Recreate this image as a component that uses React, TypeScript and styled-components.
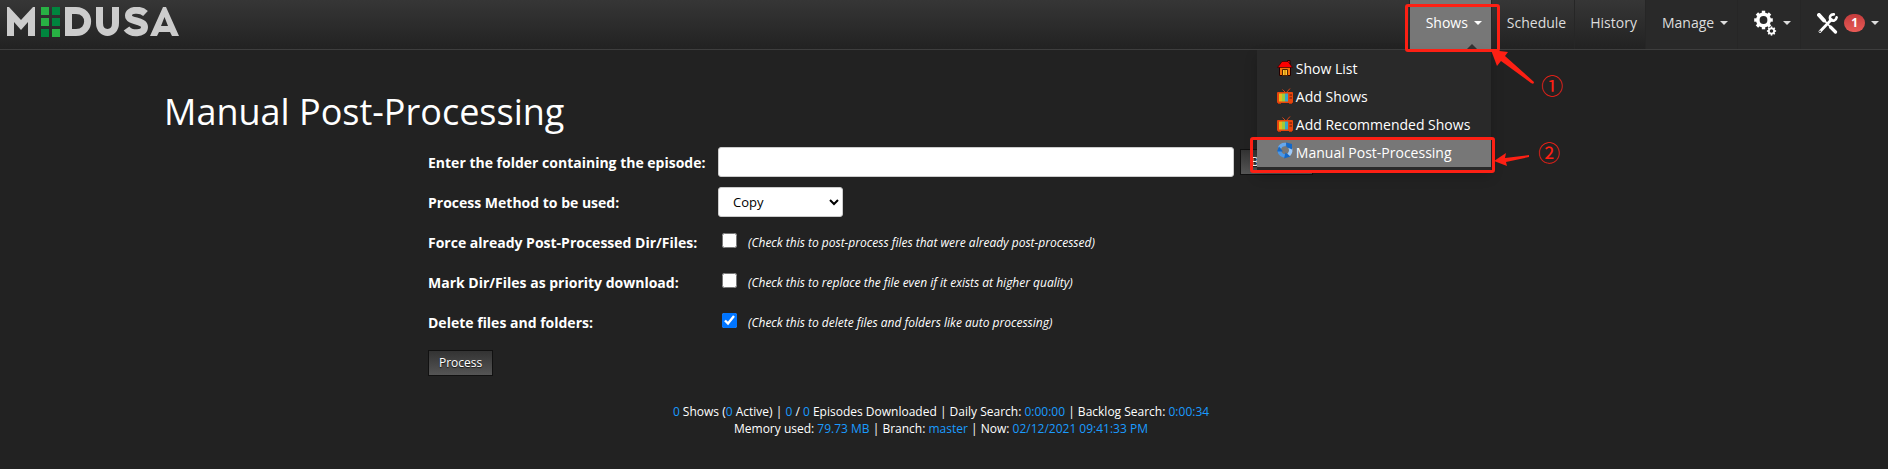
import React from "react";
import styled, { createGlobalStyle, css } from "styled-components";

const GlobalStyle = createGlobalStyle`
  *, *::before, *::after { box-sizing: border-box; }
  body {
    margin: 0;
    background: #222;
    color: #fff;
    font-family: "Open Sans", "Noto Sans CJK SC", sans-serif;
    font-size: 14px;
    line-height: 20px;
  }
`;

const Navbar = styled.header`
  display: flex;
  justify-content: space-between;
  height: 50px;
  background: linear-gradient(#363636, #222);
  border-bottom: 1px solid #3e3e3e;
`;

const Brand = styled.a`
  display: block;
  padding: 7px 0 0 6px;
`;

const NavList = styled.ul`
  display: flex;
  margin: 0;
  padding: 0;
  list-style: none;
`;

const NavItem = styled.li`
  position: relative;
`;

const NavLink = styled.a<{ $tone?: "active" | "dark" }>`
  display: flex;
  align-items: center;
  gap: 6px;
  height: 49px;
  padding: 0 8px 3px 15px;
  border-left: 1px solid #262626;
  color: #ddd;
  text-decoration: none;
  ${(p) => p.$tone === "dark" && css`background: #292929; padding: 0 9px 3px 16px;`}
  ${(p) => p.$tone === "active" && css`background: #777; color: #fff; padding: 0 9px 3px 16px;`}
`;

const Caret = styled.span`
  border: 4px solid transparent;
  border-top-color: currentColor;
  border-bottom: 0;
`;

const Badge = styled.span`
  padding: 0 7px;
  border-radius: 9px;
  background: linear-gradient(#c43c3c, #e85a56);
  color: #fff;
  font-size: 12px;
  font-weight: 700;
  line-height: 18px;
`;

const MenuPointer = styled.span`
  position: absolute;
  right: 14px;
  bottom: 0;
  border: 5px solid transparent;
  border-bottom-color: #333;
  border-top: 0;
`;

const Menu = styled.ul`
  position: absolute;
  z-index: 2;
  top: 50px;
  right: 0;
  width: 234px;
  margin: 0;
  padding: 5px 0 3px;
  background: #292929;
  box-shadow: 0 6px 12px rgba(0, 0, 0, 0.2);
  list-style: none;
`;

const MenuLink = styled.a<{ $active?: boolean }>`
  display: flex;
  align-items: center;
  gap: 3px;
  height: 28px;
  padding-left: 20px;
  background: ${(p) => (p.$active ? "#777" : "transparent")};
  color: #fff;
  text-decoration: none;
  white-space: nowrap;
`;

const Highlight = styled.span<{ $target: "tab" | "entry" }>`
  position: absolute;
  z-index: 3;
  border: 3px solid #fd2014;
  border-radius: 3px;
  pointer-events: none;
  ${(p) => p.$target === "tab"
    ? css`inset: 4px -9px -3px -4px;`
    : css`inset: 87px -4px -3px -7px;`}
`;

const Notes = styled.svg`
  position: absolute;
  z-index: 4;
  top: 40px;
  left: 80px;
  pointer-events: none;
`;

const Main = styled.main`
  padding: 40px 0 0 164px;
`;

const Title = styled.h1`
  margin: 0;
  font-size: 36px;
  font-weight: 400;
  line-height: 44px;
`;

const Form = styled.form`
  margin: 13px 0 0 264px;
`;

const Rows = styled.div`
  display: grid;
  gap: 10px;
  margin-bottom: 13px;
`;

const Row = styled.div`
  display: grid;
  grid-template-columns: 290px auto;
  align-items: center;
  min-height: 30px;
`;

const Label = styled.label`
  padding-top: 2px;
  font-weight: 700;
`;

const Field = styled.div`
  display: flex;
  align-items: center;
  gap: 6px;
`;

const TextInput = styled.input`
  width: 516px;
  height: 30px;
  padding: 4px 12px;
  border: 1px solid #ccc;
  border-radius: 3px;
  background: #fff;
  font: inherit;
`;

const Select = styled.select`
  width: 125px;
  height: 30px;
  padding: 0 0 0 10px;
  border: 1px solid #ccc;
  border-radius: 3px;
  background: #fff;
  color: #000;
  font: inherit;
  font-size: 13px;
`;

const Tick = styled.input`
  width: 15px;
  height: 15px;
  margin: 0 5px 3px 4px;
  accent-color: #0075ff;
`;

const Hint = styled.span`
  padding-top: 2px;
  font-size: 12px;
  font-style: italic;
`;

const Button = styled.button`
  display: block;
  height: 26px;
  padding: 0 10px;
  border: 1px solid #111;
  background: linear-gradient(#333, #555);
  color: #fff;
  font: inherit;
  font-size: 12px;
  text-shadow: 0 1px 1px rgba(0, 0, 0, 0.75);
`;

const Footer = styled.footer`
  padding: 27px 6px 20px 0;
  font-size: 12px;
  line-height: 17px;
  text-align: center;
`;

const Value = styled.span`
  color: #1a9cff;
`;

const Logo = () => (
  <svg width="175" height="31" viewBox="0 0 175 31" role="img" aria-label="Medusa">
    <g fill="none" stroke="#ccc" strokeWidth="7">
      <path d="M62.500 3.500H70C85.500 3.500 85.500 25.500 70 25.500H62.500Z" />
      <path d="M93.500 0V16C93.500 28.500 109.500 28.500 109.500 16V0" />
      <path d="M139.500 6.500C134 1.500 122.500 2.500 122.500 8.500C122.500 15.500 138.500 12.500 138.500 20C138.500 27.500 125 27.500 120.500 21.500" />
    </g>
    <path d="M1 29V0H3L15 13 27 0H29V29H22V15L15 23 8 15V29Z" fill="#ccc" />
    <path
      d="M144 29L157 0H160L173 29H166L164 25H153L151 29ZM158.500 10L155 19H162Z"
      fill="#ccc"
      fillRule="evenodd"
    />
    {[0, 11, 22].map((y, i) => (
      <g key={y}>
        <rect x="35" y={y} width="8" height="8" fill={i === 2 ? "#00853e" : "#28b144"} />
        <rect x="46" y={y} width="8" height="8" fill={i === 2 ? "#28b144" : "#00853e"} />
      </g>
    ))}
  </svg>
);

const teeth = [0, 45, 90, 135, 180, 225, 270, 315];

const Cogs = () => (
  <svg width="23" height="26" viewBox="0 0 23 26" aria-hidden="true">
    <g fill="none" stroke="#fff">
      <circle cx="9.500" cy="10" r="5.700" strokeWidth="3.600" />
      {teeth.map((a) => (
        <path key={a} d="M9.500 3.500V.7" strokeWidth="3.400" transform={`rotate(${a} 9.500 10)`} />
      ))}
      <circle cx="17.500" cy="21" r="2.700" strokeWidth="1.800" />
      {teeth.map((a) => (
        <path key={a} d="M17.500 18V16.400" strokeWidth="1.600" transform={`rotate(${a} 17.500 21)`} />
      ))}
    </g>
  </svg>
);

const Tools = () => (
  <svg width="21" height="21" viewBox="0 0 21 21" aria-hidden="true">
    <g fill="none" stroke="#fff" strokeLinecap="round">
      <path d="M2 2L7 7.500" strokeWidth="4" />
      <path d="M7 7L13 13.500" strokeWidth="1.800" />
      <path d="M13.500 14L18.500 19" strokeWidth="3.200" />
      <path d="M3 18.500L14.500 6.500" strokeWidth="2.800" />
      <path d="M16.800 1.400C13.500 1.200 12.200 4 13.400 6.600C16 8.600 19 7.600 19.600 4.400" strokeWidth="2.600" />
    </g>
    <circle cx="3" cy="18.400" r=".8" fill="#292929" />
  </svg>
);

const House = () => (
  <svg width="16" height="18" viewBox="0 0 16 18" aria-hidden="true">
    <path d="M10.500 .5H13V6H10.500Z" fill="#e11" stroke="#200" />
    <path d="M2.500 6.500H13.500V15.500H2.500Z" fill="#f4730c" stroke="#200" />
    <path d="M5 1.500H11L15.500 7.500H.5Z" fill="#f00" stroke="#300" strokeWidth=".7" />
    <path d="M5.500 9.500H10.500V15.500H5.500Z" fill="#fc3" stroke="#520" />
    <path d="M8 10V15" stroke="#b60" />
  </svg>
);

const Television = () => (
  <svg width="16" height="18" viewBox="0 0 16 18" aria-hidden="true">
    <path d="M5.500 1.500L9 5 13 .5" fill="none" stroke="#d84315" />
    <rect y="4" width="16" height="11" rx="1" fill="#e8450c" />
    <path d="M1 15H4V16H1ZM12 15H15V16H12Z" fill="#b8340b" />
    <path d="M2 5.500H5V13.500H2Z" fill="#e7b91d" />
    <path d="M5 5.500H8V13.500H5Z" fill="#9acb3e" />
    <path d="M8 5.500H11V13.500H8Z" fill="#38a4c7" />
    <path d="M12.500 7H15M12.500 10H15" stroke="#601b09" />
  </svg>
);

const Recycle = () => (
  <svg width="16" height="22" viewBox="0 0 16 22" aria-hidden="true">
    <g fill="none" strokeWidth="3.600">
      <path d="M2.500 6A6 6 0 0 1 9 2.600" stroke="#64a7ee" />
      <path d="M13 5.500A6 6 0 0 1 11.500 13" stroke="#9dc9f8" />
      <path d="M9 14A6 6 0 0 1 2.300 8.500" stroke="#4b97e6" />
    </g>
    <path d="M9 .5L15 2V7.500L9.500 5ZM13.500 14.500L7 16.500 8.500 10.500ZM0 9.500L2 4.500 6 9.500Z" fill="#1268ca" />
  </svg>
);

const Annotations = () => (
  <Notes width="90" height="130" viewBox="0 0 90 130" aria-hidden="true">
    <g fill="#fd2014">
      <path d="M2 10L19 12 16 16 45 42Q45 45 42 43L12 21 8 26Z" />
      <path d="M5 121L17 113 16 118 40 115V117L17 122 18 126Z" />
    </g>
    <g fill="#fd2014" fontSize="22" textAnchor="middle">
      <text x="63" y="54">①</text>
      <text x="60" y="121">②</text>
    </g>
  </Notes>
);

const menu = [
  { label: "Show List", icon: <House /> },
  { label: "Add Shows", icon: <Television /> },
  { label: "Add Recommended Shows", icon: <Television /> },
  { label: "Manual Post-Processing", icon: <Recycle />, active: true },
];

const options = [
  { id: "force", label: "Force already Post-Processed Dir/Files:", hint: "(Check this to post-process files that were already post-processed)" },
  { id: "priority", label: "Mark Dir/Files as priority download:", hint: "(Check this to replace the file even if it exists at higher quality)" },
  { id: "delete", label: "Delete files and folders:", hint: "(Check this to delete files and folders like auto processing)", checked: true },
];

export default function App() {
  return (
    <>
      <GlobalStyle />
      <Navbar>
        <Brand href="#"><Logo /></Brand>
        <nav>
          <NavList>
            <NavItem>
              <NavLink href="#" $tone="active">Shows <Caret /></NavLink>
              <MenuPointer />
              <Menu>
                {menu.map((m) => (
                  <li key={m.label}>
                    <MenuLink href="#" $active={m.active}>{m.icon}{m.label}</MenuLink>
                  </li>
                ))}
                <Highlight as="li" $target="entry" aria-hidden="true" />
              </Menu>
              <Highlight $target="tab" />
              <Annotations />
            </NavItem>
            <NavItem><NavLink href="#">Schedule</NavLink></NavItem>
            <NavItem><NavLink href="#">History</NavLink></NavItem>
            <NavItem><NavLink href="#" $tone="dark">Manage <Caret /></NavLink></NavItem>
            <NavItem><NavLink href="#" $tone="dark" aria-label="Settings"><Cogs /><Caret /></NavLink></NavItem>
            <NavItem><NavLink href="#" $tone="dark" aria-label="Tools"><Tools /><Badge>1</Badge><Caret /></NavLink></NavItem>
          </NavList>
        </nav>
      </Navbar>
      <Main>
        <Title>Manual Post-Processing</Title>
        <Form>
          <Rows>
            <Row>
              <Label htmlFor="folder">Enter the folder containing the episode:</Label>
              <Field>
                <TextInput id="folder" type="text" />
                <Button type="button">Browse...</Button>
              </Field>
            </Row>
            <Row>
              <Label htmlFor="method">Process Method to be used:</Label>
              <Field>
                <Select id="method" defaultValue="copy"><option value="copy">Copy</option></Select>
              </Field>
            </Row>
            {options.map((o) => (
              <Row key={o.id}>
                <Label htmlFor={o.id}>{o.label}</Label>
                <Field>
                  <Tick id={o.id} type="checkbox" defaultChecked={o.checked} />
                  <Hint>{o.hint}</Hint>
                </Field>
              </Row>
            ))}
          </Rows>
          <Button type="button">Process</Button>
        </Form>
      </Main>
      <Footer>
        <div>
          <Value>0</Value> Shows (<Value>0</Value> Active) | <Value>0</Value> / <Value>0</Value> Episodes Downloaded | Daily Search: <Value>0:00:00</Value> | Backlog Search: <Value>0:00:34</Value>
        </div>
        <div>
          Memory used: <Value>79.73 MB</Value> | Branch: <Value>master</Value> | Now: <Value>02/12/2021 09:41:33 PM</Value>
        </div>
      </Footer>
    </>
  );
}
